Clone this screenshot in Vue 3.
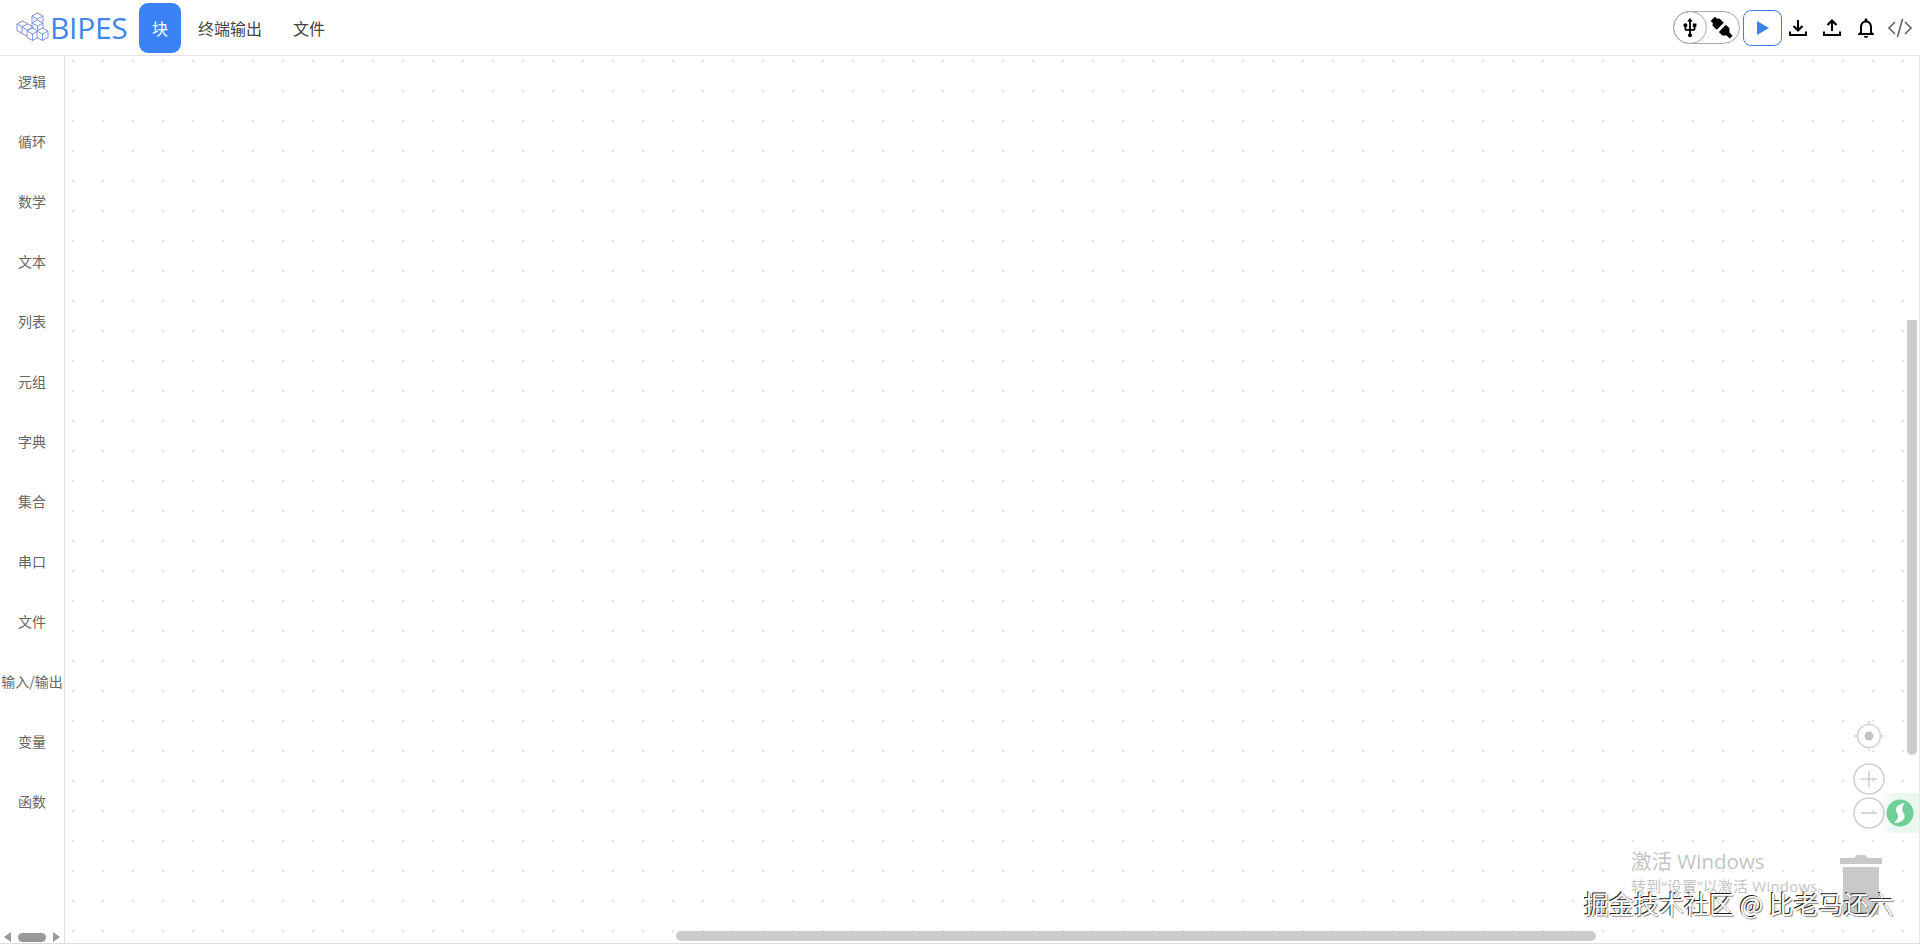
<template>
  <div class="page">
    <header class="topbar">
      <div class="brand">
        <svg class="logo" width="34" height="30" viewBox="0 0 34 30" fill="none" stroke="#8b86d6" stroke-width="1">
          <g v-for="cube in cubes" :key="cube.x + '-' + cube.y" :transform="`translate(${cube.x} ${cube.y})`">
            <path d="M0 3 L5.500 0 L11 3 L11 9.500 L5.500 12.500 L0 9.500 Z" fill="#fff" />
            <path d="M0 3 L5.500 6 L11 3 M5.500 6 L5.500 12.500" stroke="#6f9be8" />
          </g>
        </svg>
        <span class="brand-name">BIPES</span>
      </div>
      <nav class="tabs">
        <div v-for="tab in tabs" :key="tab" class="tab" :class="{ active: tab === '块' }">{{ tab }}</div>
      </nav>
      <div class="actions">
        <div class="toggle">
          <div class="toggle-on">
            <svg width="22" height="22" viewBox="0 0 24 24" fill="#000">
              <path d="M15 7v4h1v2h-3V5h2l-3-4-3 4h2v8H8v-2.070c.7-.37 1.200-1.080 1.200-1.930 0-1.210-.99-2.200-2.200-2.200-1.210 0-2.200.99-2.200 2.200 0 .85.5 1.560 1.200 1.930V13c0 1.110.89 2 2 2h3v3.050c-.71.37-1.200 1.100-1.200 1.950 0 1.220.99 2.200 2.200 2.200 1.210 0 2.200-.98 2.200-2.200 0-.85-.49-1.580-1.200-1.950V15h3c1.110 0 2-.89 2-2v-2h1V7h-4z" />
            </svg>
          </div>
          <svg class="plug" width="26" height="26" viewBox="0 0 26 26" fill="#000">
            <g transform="rotate(-45 13 13)">
              <path d="M10 0 h6 v3 l2 1.500 v6 h-10 v-6 l2 -1.500 z" />
              <path d="M8 13.500 h10 v5 l-3 3 v4.500 h-4 v-4.500 l-3 -3 z" />
            </g>
          </svg>
        </div>
        <button class="play">
          <svg width="14" height="14" viewBox="0 0 14 14" fill="#3b82e8"><path d="M1 0 L13 7 L1 14 Z" /></svg>
        </button>
        <div class="icon-btn">
          <svg width="20" height="20" viewBox="0 0 20 20" fill="none" stroke="#000" stroke-width="2.100">
            <path d="M10 2 V12 M5.500 8 L10 12.500 L14.500 8 M2 13.500 V17 H18 V13.500" />
          </svg>
        </div>
        <div class="icon-btn">
          <svg width="20" height="20" viewBox="0 0 20 20" fill="none" stroke="#000" stroke-width="2.100">
            <path d="M10 13 V3 M5.500 7 L10 2.500 L14.500 7 M2 13.500 V17 H18 V13.500" />
          </svg>
        </div>
        <div class="icon-btn">
          <svg width="24" height="24" viewBox="0 0 24 24" fill="#000">
            <path d="M12 22c1.100 0 2-.9 2-2h-4c0 1.100.9 2 2 2zm6-6v-5c0-3.070-1.630-5.640-4.500-6.320V4c0-.83-.67-1.500-1.500-1.500s-1.500.67-1.500 1.500v.68C7.640 5.360 6 7.920 6 11v5l-2 2v1h16v-1l-2-2zm-2 1H8v-6c0-2.480 1.510-4.500 4-4.500s4 2.020 4 4.500v6z" />
          </svg>
        </div>
        <div class="icon-btn">
          <svg width="24" height="20" viewBox="0 0 24 20" fill="none" stroke="#666" stroke-width="1.600">
            <path d="M7 4 L1 10 L7 16 M17 4 L23 10 L17 16 M14.500 1 L9.500 19" />
          </svg>
        </div>
      </div>
    </header>

    <main class="workspace">
      <aside class="sidebar">
        <div v-for="item in categories" :key="item" class="category">{{ item }}</div>
        <div class="side-scroll">
          <span class="arrow left"></span>
          <span class="side-thumb"></span>
          <span class="arrow right"></span>
        </div>
      </aside>

      <section class="canvas">
        <div class="v-scroll"></div>
        <div class="h-scroll"></div>

        <svg class="control target" width="34" height="34" viewBox="0 0 34 34" fill="none" stroke="#d4d4d4" stroke-width="1.500">
          <circle cx="17" cy="17" r="11.500" />
          <circle cx="17" cy="17" r="4.500" fill="#c4c4c4" stroke="none" />
          <path d="M17 2 V6 M17 28 V32 M2 17 H6 M28 17 H32" />
        </svg>
        <svg class="control plus" width="32" height="32" viewBox="0 0 32 32" fill="none" stroke="#d0d0d0" stroke-width="1.600">
          <circle cx="16" cy="16" r="15" />
          <path d="M8 16 H24 M16 8 V24" />
        </svg>
        <svg class="control minus" width="32" height="32" viewBox="0 0 32 32" fill="none" stroke="#d0d0d0" stroke-width="1.600">
          <circle cx="16" cy="16" r="15" />
          <path d="M8 16 H24" />
        </svg>

        <div class="helper">
          <svg width="28" height="28" viewBox="0 0 28 28">
            <circle cx="14" cy="14" r="13.500" fill="#6fcf97" />
            <path d="M19 4 C11 5 8 10 11 14 C13 17 12 20 8 24 C16 24 21 19 17.500 14 C15.500 11 16 7 19 4 Z" fill="#fff" />
          </svg>
        </div>

        <svg class="trash" width="42" height="60" viewBox="0 0 42 60" fill="#c9c9c9">
          <path d="M0 3 H14 L17 0 H25 L28 3 H42 V9 H0 Z" />
          <path d="M3 12 H39 V60 H3 Z" />
        </svg>

        <div class="activate">
          <div class="activate-title">激活 Windows</div>
          <div class="activate-sub">转到“设置”以激活 Windows。</div>
        </div>
        <div class="watermark">掘金技术社区 @ 比老马还六</div>
      </section>
    </main>
  </div>
</template>

<script setup>
const tabs = ['块', '终端输出', '文件']
const categories = ['逻辑', '循环', '数学', '文本', '列表', '元组', '字典', '集合', '串口', '文件', '输入/输出', '变量', '函数']
const cubes = [
  { x: 16, y: 1 },
  { x: 16, y: 8 },
  { x: 1, y: 9 },
  { x: 6, y: 12 },
  { x: 11, y: 16 },
  { x: 21, y: 16 },
]
</script>

<style>
html, body {
  margin: 0;
  background: #fff;
}
</style>

<style scoped>
.page {
  width: 1920px;
  height: 945px;
  display: flex;
  flex-direction: column;
  overflow: hidden;
  background: #fff;
  font-family: "Noto Sans CJK SC", "Liberation Sans", sans-serif;
}

.topbar {
  height: 55px;
  flex: none;
  display: flex;
  align-items: center;
  border-bottom: 1px solid #e2e2e2;
}

.brand {
  display: flex;
  align-items: center;
  padding-left: 16px;
  width: 139px;
  box-sizing: border-box;
}

.logo {
  flex: none;
  margin-top: -1px;
}

.brand-name {
  font-family: "Open Sans", sans-serif;
  font-size: 30px;
  font-weight: 500;
  line-height: 36px;
  letter-spacing: -0.3px;
  color: #4285ec;
}

.tabs {
  display: flex;
  align-items: center;
}

.tab {
  height: 50px;
  padding: 0 15px;
  margin-right: 1px;
  display: flex;
  align-items: center;
  font-size: 16px;
  color: #444;
  border-radius: 9px;
  box-sizing: border-box;
}

.tab.active {
  width: 42px;
  padding: 0;
  justify-content: center;
  margin-right: 2px;
  background: #3b82f6;
  color: #fff;
}

.actions {
  margin-left: auto;
  margin-right: 3px;
  display: flex;
  align-items: center;
}

.toggle {
  width: 67px;
  height: 33px;
  box-sizing: border-box;
  border: 1px solid #aaa;
  border-radius: 17px;
  display: flex;
  align-items: center;
  margin-right: 3px;
}

.toggle-on {
  width: 34px;
  height: 33px;
  flex: none;
  box-sizing: border-box;
  border: 1px solid #aaa;
  border-radius: 17px;
  margin-left: -1px;
  display: flex;
  align-items: center;
  justify-content: center;
}

.plug {
  margin-left: 2px;
}

.play {
  width: 39px;
  height: 36px;
  box-sizing: border-box;
  border: 1px solid #3b82e8;
  border-radius: 8px;
  background: #fff;
  padding: 0;
  display: flex;
  align-items: center;
  justify-content: center;
  margin-right: -1px;
}

.icon-btn {
  width: 34px;
  height: 36px;
  display: flex;
  align-items: center;
  justify-content: center;
}

.workspace {
  flex: 1;
  display: flex;
  min-height: 0;
  margin-bottom: 1px;
  border-bottom: 1px solid #ddd;
}

.sidebar {
  width: 64px;
  flex: none;
  position: relative;
  border-right: 1px solid #ddd;
}

.category {
  height: 60px;
  padding-bottom: 10px;
  box-sizing: border-box;
  display: flex;
  align-items: center;
  justify-content: center;
  font-size: 14px;
  color: #666;
  white-space: nowrap;
}

.side-scroll {
  position: absolute;
  left: 4px;
  bottom: 1px;
  display: flex;
  align-items: center;
  height: 10px;
}

.side-thumb {
  width: 28px;
  height: 9px;
  border-radius: 5px;
  background: #999;
  margin: 0 7px;
}

.arrow {
  width: 0;
  height: 0;
  border-top: 5px solid transparent;
  border-bottom: 5px solid transparent;
}

.arrow.left {
  border-right: 7px solid #999;
}

.arrow.right {
  border-left: 7px solid #999;
}

.canvas {
  flex: 1;
  position: relative;
  overflow: hidden;
  border-right: 1px solid #e8e8e8;
  background-image: radial-gradient(circle at 8px 5px, #e0e0e0 0.8px, transparent 1.400px);
  background-size: 30px 30px;
}

.v-scroll {
  position: absolute;
  left: 1842px;
  top: 264px;
  width: 10px;
  height: 435px;
  border-radius: 0 0 5px 5px;
  background: #ccc;
}

.h-scroll {
  position: absolute;
  left: 611px;
  top: 875px;
  width: 920px;
  height: 10px;
  border-radius: 5px;
  background: #ccc;
}

.control {
  position: absolute;
}

.target {
  left: 1787px;
  top: 663px;
}

.plus {
  left: 1788px;
  top: 707px;
}

.minus {
  left: 1788px;
  top: 741px;
}

.helper {
  position: absolute;
  left: 1814px;
  top: 737px;
  width: 41px;
  height: 40px;
  display: flex;
  align-items: center;
  justify-content: center;
  background: linear-gradient(90deg, rgba(111, 207, 151, 0), rgba(111, 207, 151, 0.15) 40%);
}

.trash {
  position: absolute;
  left: 1775px;
  top: 799px;
}

.activate {
  position: absolute;
  left: 1566px;
  top: 791px;
  color: #c4c4c4;
  white-space: nowrap;
  font-family: "Open Sans", "Noto Sans CJK SC", sans-serif;
}

.activate-title {
  font-size: 20.500px;
  line-height: 28px;
}

.activate-sub {
  font-size: 15px;
  line-height: 20px;
  letter-spacing: 0.2px;
  margin-top: 1px;
}

.watermark {
  position: absolute;
  left: 1519px;
  top: 831px;
  font-size: 25px;
  line-height: 32px;
  white-space: nowrap;
  color: #fff;
  text-shadow: -1px -1px 0 #222, 1px 1px 1px #888;
}
</style>
